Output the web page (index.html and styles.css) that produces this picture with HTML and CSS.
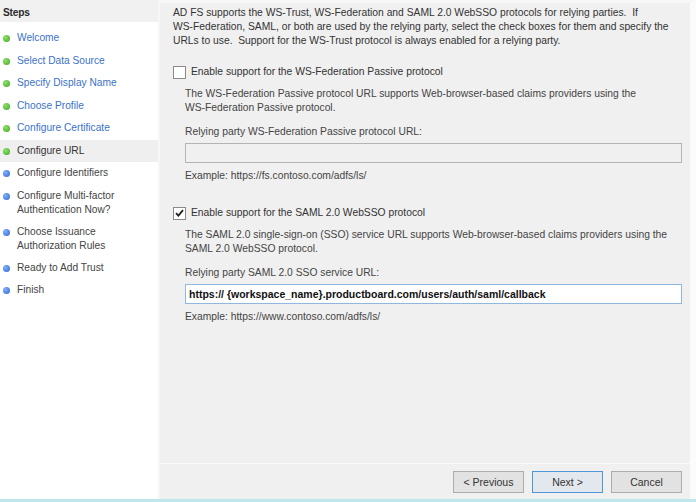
FILE: index.html
```html
<!DOCTYPE html>
<html>
<head>
<meta charset="utf-8">
<link rel="stylesheet" href="styles.css">
</head>
<body>
<div class="window">
  <div class="main">
    <aside class="steps">
      <div class="steps-head">Steps</div>
      <ul class="step-list">
        <li class="step done"><span class="dot green"></span><span>Welcome</span></li>
        <li class="step done"><span class="dot green"></span><span>Select Data Source</span></li>
        <li class="step done"><span class="dot green"></span><span>Specify Display Name</span></li>
        <li class="step done"><span class="dot green"></span><span>Choose Profile</span></li>
        <li class="step done"><span class="dot green"></span><span>Configure Certificate</span></li>
        <li class="step current"><span class="dot green"></span><span>Configure URL</span></li>
        <li class="step"><span class="dot blue"></span><span>Configure Identifiers</span></li>
        <li class="step two"><span class="dot blue"></span><span>Configure Multi-factor<br>Authentication Now?</span></li>
        <li class="step two"><span class="dot blue"></span><span>Choose Issuance<br>Authorization Rules</span></li>
        <li class="step"><span class="dot blue"></span><span>Ready to Add Trust</span></li>
        <li class="step"><span class="dot blue"></span><span>Finish</span></li>
      </ul>
    </aside>
    <section class="content">
      <div class="body">
        <p class="intro">AD FS supports the WS-Trust, WS-Federation and SAML 2.0 WebSSO protocols for relying parties.&nbsp; If WS&#8209;Federation, SAML, or both are used by the relying party, select the check boxes for them and specify the URLs to use.&nbsp; Support for the WS-Trust protocol is always enabled for a relying party.</p>

        <label class="check"><span class="box"></span><span>Enable support for the WS-Federation Passive protocol</span></label>
        <div class="group">
          <p class="desc">The WS-Federation Passive protocol URL supports Web-browser-based claims providers using the WS&#8209;Federation Passive protocol.</p>
          <p class="field-label">Relying party WS-Federation Passive protocol URL:</p>
          <div class="input disabled"></div>
          <p class="example">Example: https://fs.contoso.com/adfs/ls/</p>
        </div>

        <label class="check second"><span class="box checked"><svg width="9" height="8" viewBox="0 0 9 8"><path d="M1 4.2 L3.4 6.6 L8 1.2" fill="none" stroke="#222" stroke-width="1.8"/></svg></span><span>Enable support for the SAML 2.0 WebSSO protocol</span></label>
        <div class="group">
          <p class="desc second">The SAML 2.0 single-sign-on (SSO) service URL supports Web-browser-based claims providers using the SAML 2.0 WebSSO protocol.</p>
          <p class="field-label second">Relying party SAML 2.0 SSO service URL:</p>
          <div class="input active">https:// {workspace_name}.productboard.com/users/auth/saml/callback</div>
          <p class="example second">Example: https://www.contoso.com/adfs/ls/</p>
        </div>
      </div>
      <div class="footer">
        <button class="btn">&lt; Previous</button>
        <button class="btn primary">Next &gt;</button>
        <button class="btn cancel">Cancel</button>
      </div>
    </section>
  </div>
  <div class="bottom-edge"></div>
</div>
</body>
</html>
```
FILE: styles.css
```css
* { box-sizing: border-box; }
html, body { margin: 0; padding: 0; }
body {
  width: 696px;
  height: 502px;
  overflow: hidden;
  font-family: "Liberation Sans", Arial, sans-serif;
  font-size: 10.3px;
  line-height: 14px;
  color: #3a3a3a;
  background: #fff;
}
.window {
  display: flex;
  flex-direction: column;
  height: 502px;
}
.main {
  flex: 1;
  display: flex;
  min-height: 0;
}
.steps {
  flex: none;
  width: 160px;
  background: #fff;
  border-right: 2px solid #f6f6f6;
  font-size: 10.2px;
}
.steps-head {
  height: 22px;
  background: #f1f1f1;
  font-weight: bold;
  color: #2a2a2a;
  padding: 6px 0 0 3px;
  letter-spacing: -0.2px;
}
.step-list {
  list-style: none;
  margin: 5px 0 0 0;
  padding: 0;
}
.step {
  display: flex;
  align-items: flex-start;
  height: 22.5px;
  padding: 4px 0 0 3px;
  color: #444;
  line-height: 14px;
}
.step.two {
  height: 36px;
}
.step.done { color: #3b72c8; }
.step.current {
  background: #efefef;
  color: #333;
}
.dot {
  width: 7px;
  height: 7px;
  border-radius: 50%;
  margin: 4px 7px 0 0;
  flex: none;
}
.dot.green { background: radial-gradient(circle at 35% 35%, #8fe06a, #3ea81f); }
.dot.blue { background: radial-gradient(circle at 35% 35%, #7fb0ff, #2c66d0); }

.content {
  flex: 1;
  min-width: 0;
  display: flex;
  flex-direction: column;
  background: #f0f0f0;
  border-top: 3px solid #f7f7f7;
  border-right: 6px solid #fbfbfb;
}
.body {
  flex: 1;
  padding: 3px 0 0 13px;
}
p { margin: 0; }
.intro {
  color: #333;
  width: 505px;
}
.check {
  display: flex;
  align-items: center;
  margin-top: 17px;
  color: #333;
  height: 14px;
}
.check.second { margin-top: 23px; }
.box {
  width: 13px;
  height: 13px;
  border: 1px solid #8a8a8a;
  background: #fff;
  margin-right: 5px;
  display: flex;
  align-items: center;
  justify-content: center;
}
.group {
  padding-left: 12px;
}
.desc {
  margin-top: 8px;
  line-height: 13.5px;
  color: #444;
  width: 488px;
}
.desc.second { margin-top: 8px; }
.field-label {
  margin-top: 11px;
  color: #444;
}
.field-label.second { margin-top: 11px; }
.input {
  margin-top: 4px;
  height: 20px;
  width: 497px;
  border: 1px solid #a8a8a8;
}
.input.disabled {
  background: #f0f0f0;
  border-color: #b4b4b4;
}
.input.active {
  background: #fff;
  border-color: #8fb8e0;
  font-weight: bold;
  color: #111;
  padding: 2px 0 0 3px;
  font-size: 10.5px;
}
.example {
  margin-top: 6px;
  color: #444;
}
.example.second { margin-top: 6px; }
.footer {
  height: 36px;
  border-top: 1px solid #fafafa;
  display: flex;
  justify-content: flex-end;
  align-items: flex-start;
  gap: 8px;
  padding: 7px 8px 0 0;
}
.btn {
  font-family: "Liberation Sans", Arial, sans-serif;
  font-size: 10.5px;
  color: #333;
  width: 71px;
  height: 22px;
  background: #e2e2e2;
  border: 1px solid #adadad;
  padding: 0;
}
.btn.primary {
  border-color: #4d97d6;
  background: #e3e8ee;
}
.bottom-edge {
  height: 3px;
  background: #bfe6ec;
}
```
